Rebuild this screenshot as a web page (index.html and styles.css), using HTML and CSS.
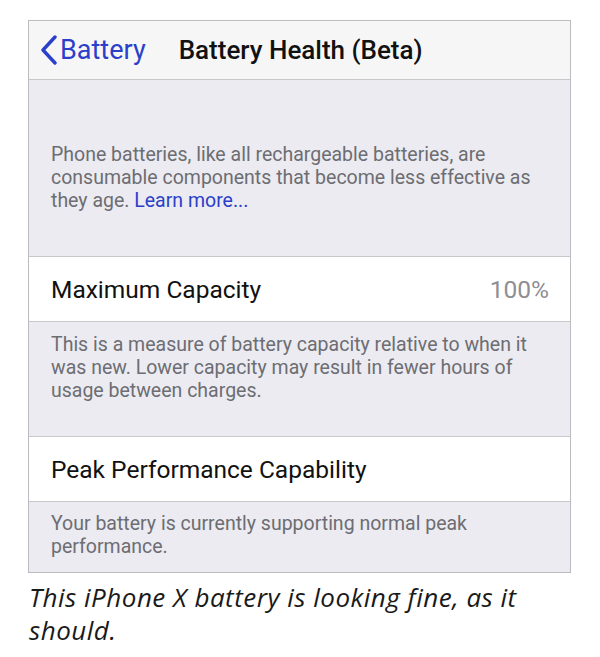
FILE: index.html
```html
<!DOCTYPE html>
<html lang="en">
<head>
    <meta charset="UTF-8">
    <meta name="viewport" content="width=device-width, initial-scale=1.0">
    <title>Battery Health (Beta)</title>
    <link rel="stylesheet" href="styles.css">
</head>
<body>
    <div class="screen">
        <div class="nav">
            <a class="back" href="#">
                <svg class="chevron" width="18" height="30" viewBox="0 0 18 30">
                    <path d="M15 2 L3 15 L15 28" fill="none" stroke="currentColor" stroke-width="3.4" stroke-linecap="round" stroke-linejoin="round"/>
                </svg>
                <span>Battery</span>
            </a>
            <h1>Battery Health (Beta)</h1>
        </div>

        <div class="note intro">
            Phone batteries, like all rechargeable batteries, are consumable components that become less effective as they age. <a href="#">Learn more...</a>
        </div>

        <div class="cell">
            <span>Maximum Capacity</span>
            <span class="value">100%</span>
        </div>
        <div class="note capacity">
            This is a measure of battery capacity relative to when it was new. Lower capacity may result in fewer hours of usage between charges.
        </div>

        <div class="cell">
            <span>Peak Performance Capability</span>
        </div>
        <div class="note peak">
            Your battery is currently supporting normal peak performance.
        </div>
    </div>

    <p class="caption">This iPhone X battery is looking fine, as it should.</p>
</body>
</html>
```

FILE: styles.css
```css
body {
    margin: 0;
    background: #fff;
    font-family: Roboto, "Liberation Sans", sans-serif;
}
.screen {
    width: 541px;
    margin: 20px 0 0 28px;
    border: 1px solid #bcbcc0;
    background: #ebebf1;
}
.nav {
    height: 58px;
    display: flex;
    align-items: center;
    background: #f6f6f7;
    border-bottom: 1px solid #c8c7cc;
    padding-left: 11px;
}
.back {
    display: flex;
    align-items: center;
    gap: 2px;
    color: #2b3fc9;
    text-decoration: none;
    font-size: 27px;
}
.chevron {
    display: block;
}
.nav h1 {
    margin: 0 0 0 33px;
    font-size: 26px;
    font-weight: 500;
    color: #111;
}
.note {
    box-sizing: border-box;
    padding: 0 18px 0 22px;
    font-size: 19.5px;
    line-height: 23px;
    color: #6d6d72;
    border-bottom: 1px solid #c8c7cc;
}
.note a {
    color: #2b3fc9;
    text-decoration: none;
}
.intro {
    height: 177px;
    padding-top: 63px;
}
.capacity {
    height: 115px;
    padding-top: 11px;
}
.peak {
    height: 70px;
    padding-top: 10px;
    border-bottom: none;
}
.cell {
    height: 64px;
    display: flex;
    align-items: center;
    justify-content: space-between;
    padding: 0 21px 0 22px;
    background: #fff;
    border-bottom: 1px solid #c8c7cc;
    font-size: 24.5px;
    color: #111;
}
.cell .value {
    color: #8e8e93;
}
.caption {
    margin: 8px 0 0 29px;
    font-family: "Open Sans", Lato, sans-serif;
    font-style: italic;
    font-size: 26px;
    letter-spacing: 0.5px;
    line-height: 33px;
    color: #1a1a1a;
    width: 520px;
}
```
